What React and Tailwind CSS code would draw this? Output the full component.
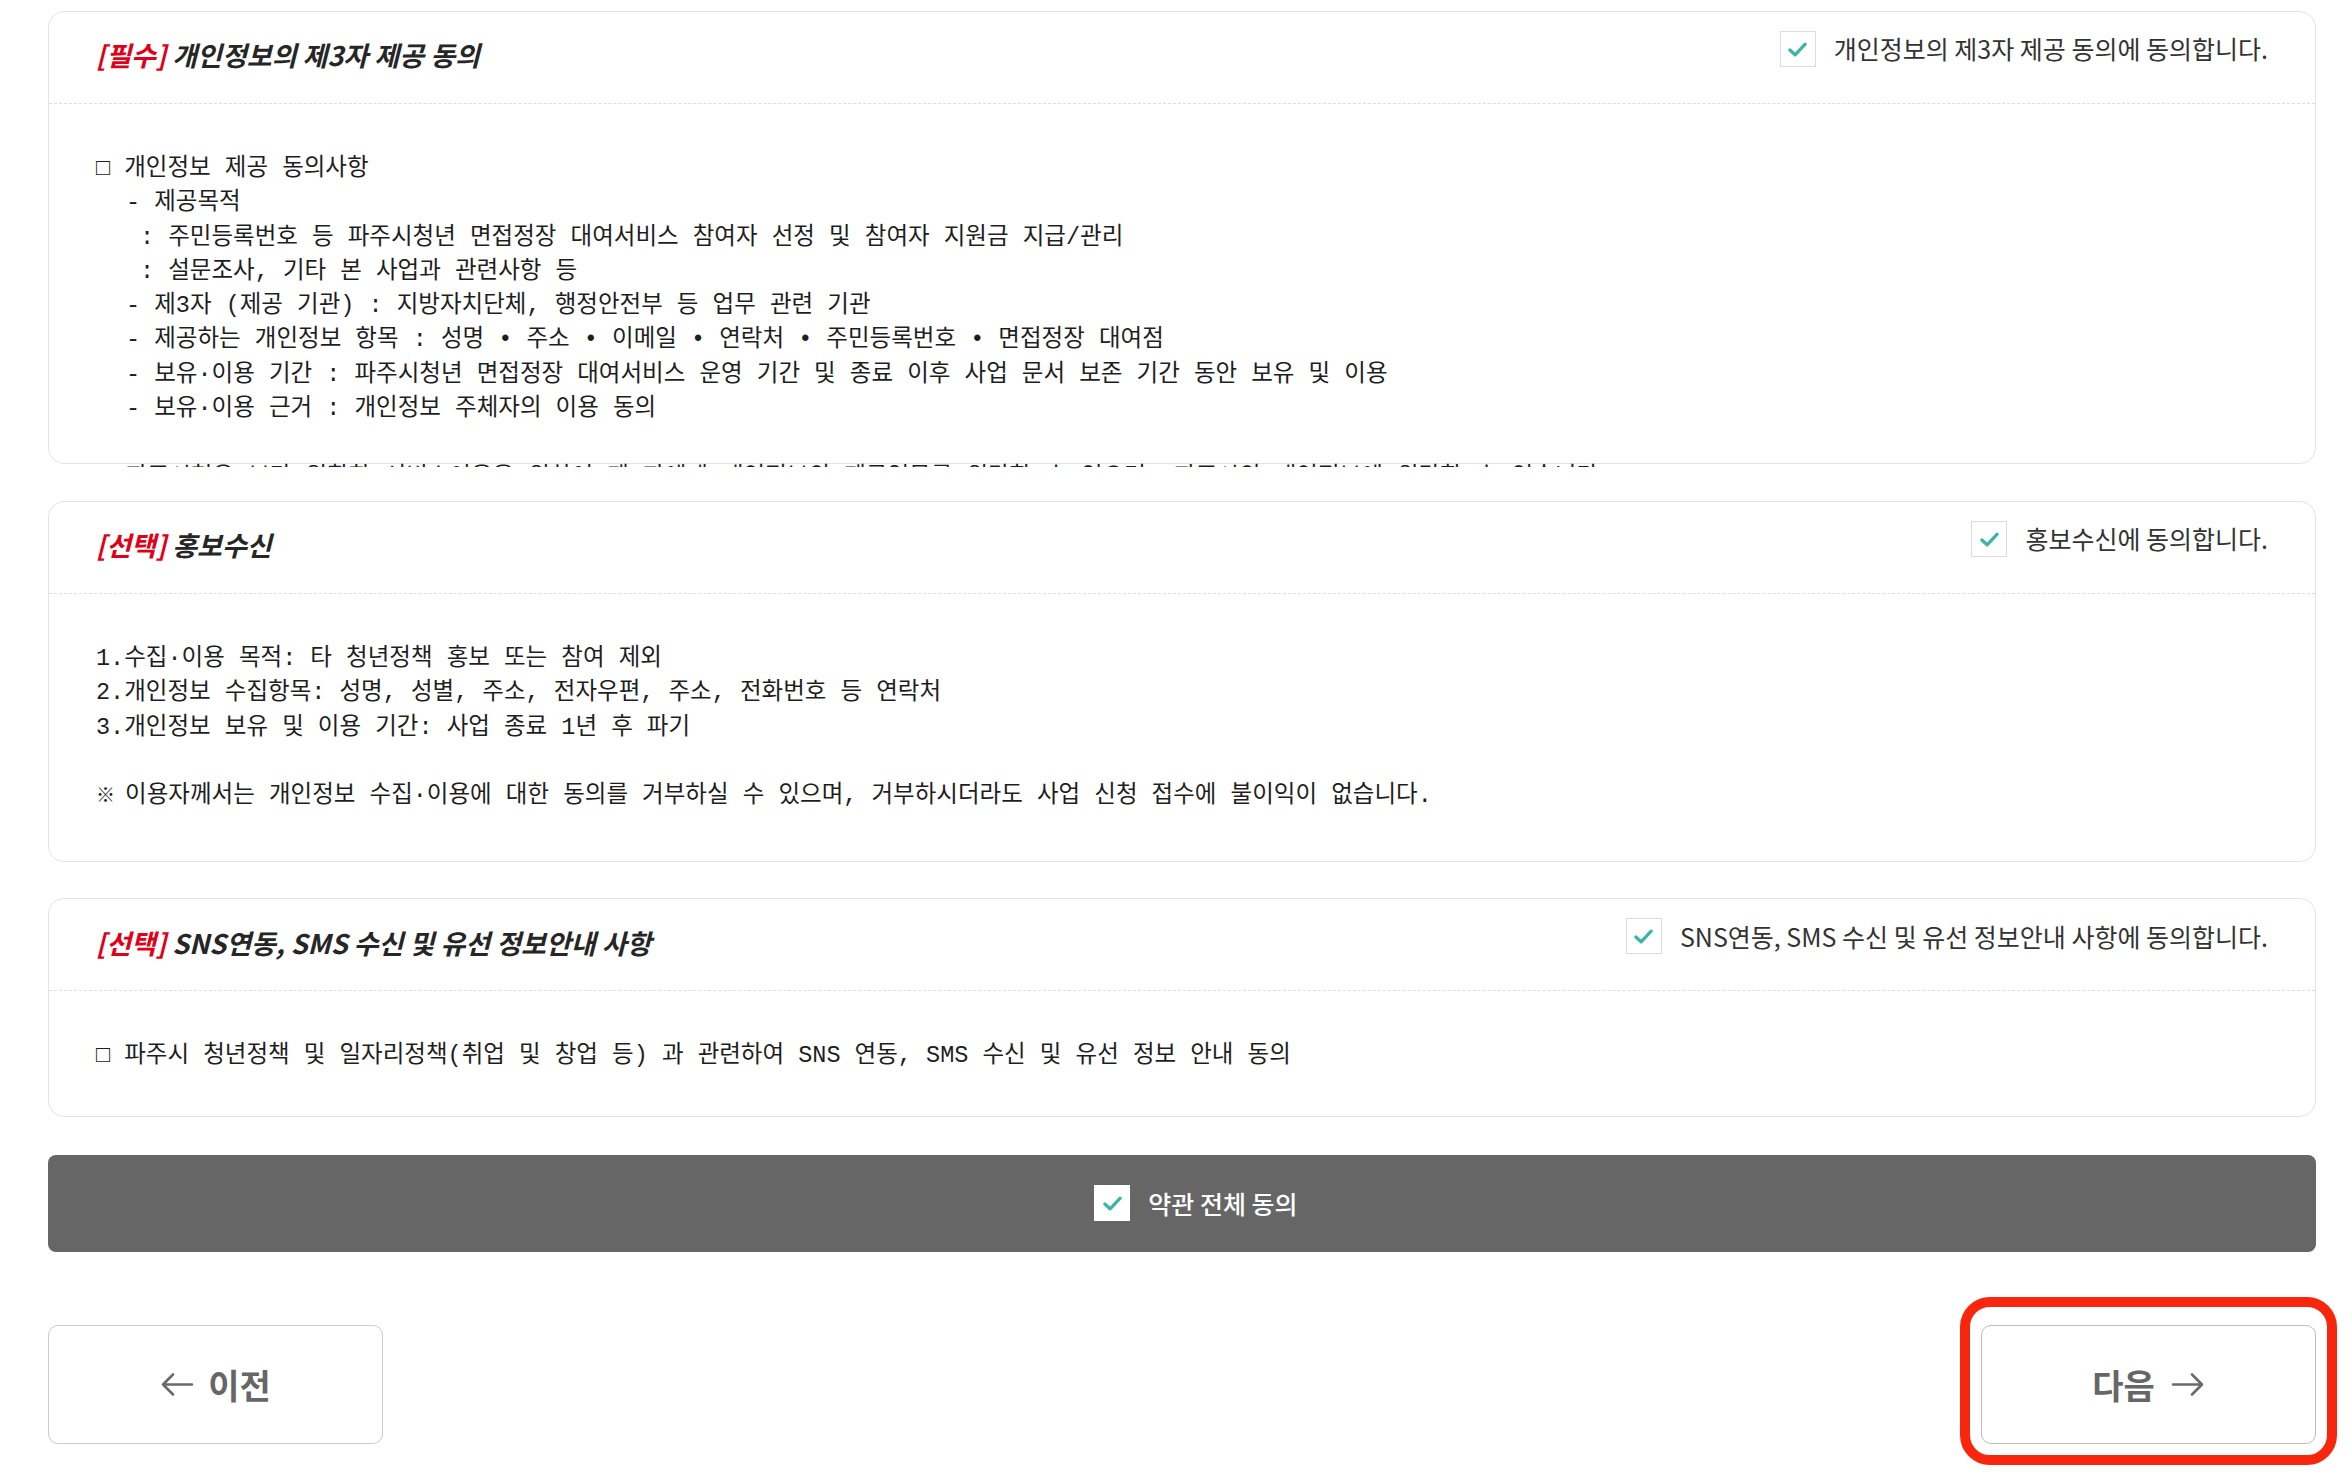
import React from 'react';

const sans = { fontFamily: "'Noto Sans CJK KR', 'Noto Sans', sans-serif" };

function Check({ className = 'w-[23px] h-[23px]' }) {
  return (
    <svg viewBox="0 0 24 24" className={className} fill="none">
      <polyline points="4,12.5 9.5,17.5 20,6.5" stroke="#3bb5a8" strokeWidth="3.4" strokeLinecap="round" strokeLinejoin="round" />
    </svg>
  );
}

function CheckBox() {
  return (
    <span className="flex items-center justify-center w-[36px] h-[36px] border border-[#dcdcdc] bg-white shrink-0">
      <Check />
    </span>
  );
}

function TermBox({ tag, title, agree, children, bodyClass }) {
  return (
    <section className="rounded-[16px] border border-[#e3e3e3] bg-white">
      <div className="flex items-center justify-between h-[92px] px-[47px] border-b border-dashed border-[#dedede]">
        <h3 className="pb-[4px] text-[27px] font-bold italic text-[#262626]" style={sans}>
          <span className="text-[#e1001a]">[{tag}]</span> {title}
        </h3>
        <label className="flex items-center gap-[18px] pb-[17px] text-[25px] text-[#333]" style={sans}>
          <CheckBox />
          <span>{agree}</span>
        </label>
      </div>
      <div
        className={`px-[47px] pt-[48px] text-[23.5px] leading-[34.3px] text-[#1e1e1e] ${bodyClass}`}
        style={{ fontFamily: "'Liberation Mono', 'Noto Sans CJK KR', monospace" }}
      >
        {children}
      </div>
    </section>
  );
}

function Line({ indent = '', children }) {
  return <div className={`whitespace-pre ${indent}`}>{children}</div>;
}

function ArrowIcon({ dir }) {
  return (
    <svg viewBox="0 0 34 24" className="w-[34px] h-[25px]" fill="none">
      {dir === 'left' ? (
        <path d="M32 12H3M13 2L3 12L13 22" stroke="#6a6a6a" strokeWidth="2.6" strokeLinecap="round" strokeLinejoin="round" />
      ) : (
        <path d="M2 12H31M21 2L31 12L21 22" stroke="#6a6a6a" strokeWidth="2.6" strokeLinecap="round" strokeLinejoin="round" />
      )}
    </svg>
  );
}

export default function App() {
  return (
    <div className="min-h-[1474px] w-[2352px] bg-white pl-[48px] pt-[11px]">
      <div className="w-[2268px]">
        <TermBox
          tag="필수"
          title="개인정보의 제3자 제공 동의"
          agree="개인정보의 제3자 제공 동의에 동의합니다."
          bodyClass="h-[363px] overflow-hidden -mb-[4px]"
        >
          <Line>□ 개인정보 제공 동의사항</Line>
          <Line indent="pl-[30px]">- 제공목적</Line>
          <Line indent="pl-[44px]">: 주민등록번호 등 파주시청년 면접정장 대여서비스 참여자 선정 및 참여자 지원금 지급/관리</Line>
          <Line indent="pl-[44px]">: 설문조사, 기타 본 사업과 관련사항 등</Line>
          <Line indent="pl-[30px]">- 제3자 (제공 기관) : 지방자치단체, 행정안전부 등 업무 관련 기관</Line>
          <Line indent="pl-[30px]">- 제공하는 개인정보 항목 : 성명 • 주소 • 이메일 • 연락처 • 주민등록번호 • 면접정장 대여점</Line>
          <Line indent="pl-[30px]">- 보유·이용 기간 : 파주시청년 면접정장 대여서비스 운영 기간 및 종료 이후 사업 문서 보존 기간 동안 보유 및 이용</Line>
          <Line indent="pl-[30px]">- 보유·이용 근거 : 개인정보 주체자의 이용 동의</Line>
          <Line> </Line>
          <Line indent="pl-[30px]">파주시청은 보다 원활한 서비스이용을 위하여 제3자에게 개인정보의 제공업무를 위탁할 수 있으며, 파주시의 개인정보에 위탁할 수 있습니다.</Line>
        </TermBox>

        <div className="mt-[37px]">
          <TermBox tag="선택" title="홍보수신" agree="홍보수신에 동의합니다." bodyClass="pb-[47px]">
            <Line>1.수집·이용 목적: 타 청년정책 홍보 또는 참여 제외</Line>
            <Line>2.개인정보 수집항목: 성명, 성별, 주소, 전자우편, 주소, 전화번호 등 연락처</Line>
            <Line>3.개인정보 보유 및 이용 기간: 사업 종료 1년 후 파기</Line>
            <Line> </Line>
            <Line>
              <span className="inline-block w-[15px] text-[19px]">※</span> 이용자께서는 개인정보 수집·이용에 대한 동의를 거부하실 수 있으며, 거부하시더라도 사업 신청 접수에 불이익이 없습니다.
            </Line>
          </TermBox>
        </div>

        <div className="mt-[36px]">
          <TermBox
            tag="선택"
            title="SNS연동, SMS 수신 및 유선 정보안내 사항"
            agree="SNS연동, SMS 수신 및 유선 정보안내 사항에 동의합니다."
            bodyClass="pb-[42px]"
          >
            <Line>□ 파주시 청년정책 및 일자리정책(취업 및 창업 등) 과 관련하여 SNS 연동, SMS 수신 및 유선 정보 안내 동의</Line>
          </TermBox>
        </div>

        <div className="mt-[38px] flex h-[97px] items-center justify-center gap-[18px] rounded-[8px] bg-[#666666] pl-[28px]" style={sans}>
          <span className="flex h-[36px] w-[36px] items-center justify-center bg-white">
            <Check />
          </span>
          <span className="text-[25px] font-medium text-white">약관 전체 동의</span>
        </div>

        <div className="mt-[73px] flex items-start justify-between" style={sans}>
          <button className="flex h-[119px] w-[335px] items-center justify-center gap-[14px] rounded-[10px] border border-[#cccccc] bg-white text-[34px] font-bold text-[#666]">
            <ArrowIcon dir="left" />
            <span>이전</span>
          </button>
          <div className="relative">
            <button className="flex h-[119px] w-[335px] items-center justify-center gap-[16px] rounded-[10px] border border-[#bdbdbd] bg-white text-[34px] font-bold text-[#666]">
              <span>다음</span>
              <ArrowIcon dir="right" />
            </button>
            <div className="pointer-events-none absolute -left-[21px] -right-[21px] -top-[28px] -bottom-[21px] rounded-[30px] border-[10px] border-[#f7260c]" />
          </div>
        </div>
      </div>
    </div>
  );
}
